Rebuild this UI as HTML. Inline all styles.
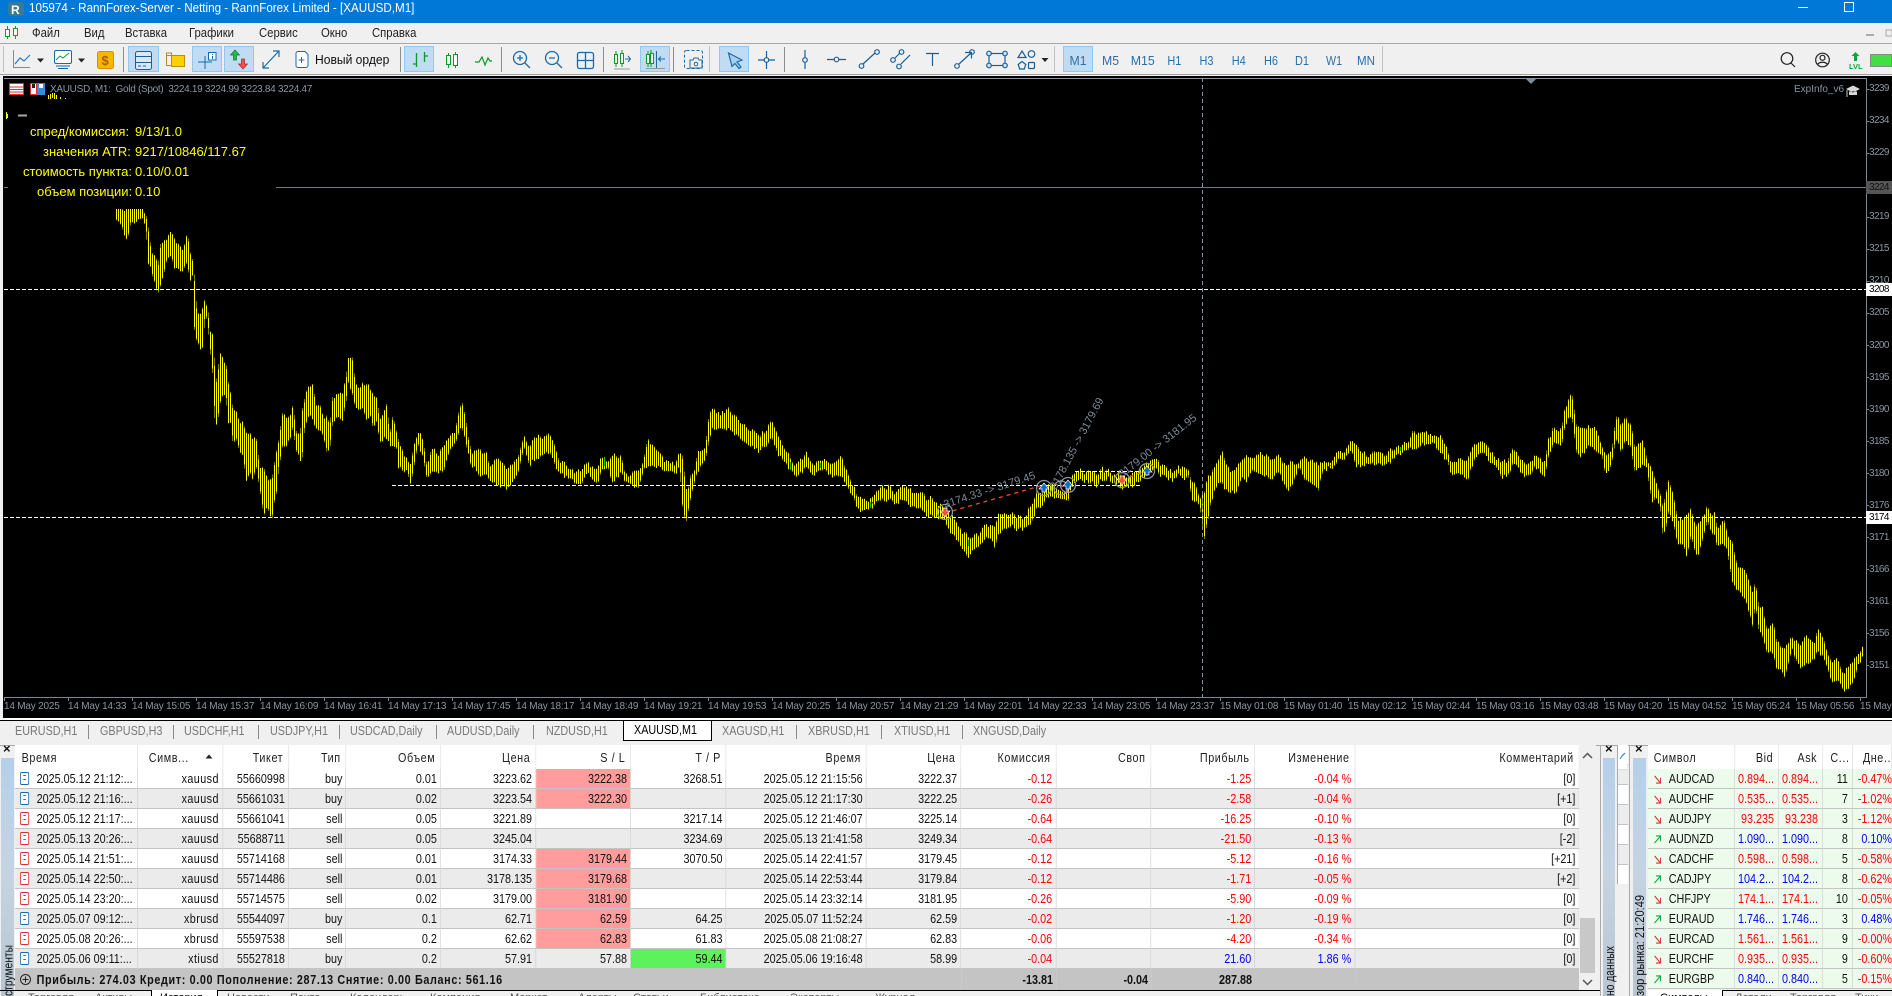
<!DOCTYPE html>
<html><head><meta charset="utf-8"><style>
html,body{margin:0;padding:0;width:1892px;height:996px;overflow:hidden;background:#f0f0f0;font-family:"Liberation Sans","Noto Sans CJK SC",sans-serif;}
#page{position:absolute;left:0;top:0;width:1892px;height:996px;overflow:hidden;background:#f0f0f0;}
.a{position:absolute;white-space:pre;transform-origin:0 50%;}
.bar{position:absolute;left:0;width:1892px;}
#chart{position:absolute;left:3px;top:76px;width:1889px;height:642px;background:#000;}
.tl,.pl{position:absolute;color:#8a96a3;font-size:10px;white-space:pre;}
.tl{top:701px;letter-spacing:-.2px;line-height:12px;}
.pl{left:1869px;letter-spacing:-.6px;line-height:12px;margin-top:1px;}
.pl.hl{left:1866px;width:23px;padding-left:3px;height:13px;line-height:13px;margin-top:0;}
.tab{position:absolute;top:723px;color:#787878;font-size:13px;line-height:15px;white-space:pre;transform:scaleX(.83);transform-origin:0 50%;}
.sp{position:absolute;top:725px;width:1px;height:14px;background:#8a8a8a;}
.wrap{position:absolute;transform:scaleX(.83);transform-origin:0 0;}
table{border-collapse:separate;border-spacing:0;table-layout:fixed;font-size:13px;color:#111;}
th{height:24px;box-sizing:border-box;font-weight:normal;text-align:right;padding:0 6px 0 0;background:#fff;border-right:1px solid #e4e4e4;letter-spacing:.7px;overflow:hidden;white-space:nowrap;color:#222;}
td{height:20px;box-sizing:border-box;padding:0 4px 0 0;text-align:right;border-right:1px solid #d4d4d4;border-bottom:1px solid #c4c4c4;overflow:hidden;white-space:nowrap;line-height:18px;}
tr:nth-child(even) td{background:#ebebeb;}
tr:nth-child(odd) td{background:#fff;}
td.l,th.l{text-align:left;}
td.s{background:#ff9c9c!important;}
td.g{background:#5cf25c!important;}
td.r,span.r{color:#f00;}
td.b,span.b{color:#00f;}
td.y{letter-spacing:.5px;}
.ic{display:inline-block;width:11px;height:13px;box-sizing:border-box;border:1.5px solid #1a6aa8;border-radius:2px;margin:0 9px 0 6px;vertical-align:-2px;position:relative;background:#fff;}
.ic:before{content:"";position:absolute;left:3px;top:2px;width:3px;height:1px;background:#1a6aa8;box-shadow:0 4px 0 #1a6aa8;}
.ic.e{border-color:#d83030;}
.ic.e:before{background:#d83030;box-shadow:0 4px 0 #d83030;}
#sum td{background:#c4c4c4!important;font-weight:bold;border:0;height:21px;}
#mw tr td{background:#edfbed!important;}
#mw td{padding-right:5px;}
#mw td:last-child{padding-right:0;border-right:0;}
.ar{display:inline-block;width:9px;height:9px;margin:0 9px 0 7px;vertical-align:-1px;}
.strip{position:absolute;top:758px;height:238px;background:linear-gradient(#b5d0ea,#c6d4e2 50%,#b8c4d0);}
.x{position:absolute;top:742px;font-size:13px;font-weight:bold;color:#111;line-height:14px;}
.bt{position:absolute;top:992px;height:4px;overflow:hidden;font-size:11px;color:#555;white-space:pre;line-height:12px;}
</style></head><body><div id="page">

<div class="bar" style="top:0;height:23px;background:#0078d7"></div>
<div class="a" style="left:29px;top:0;line-height:16px;font-size:13px;color:#fff;transform:scaleX(.895)">105974 - RannForex-Server - Netting - RannForex Limited - [XAUUSD,M1]</div>
<div class="bar" style="top:23px;height:20px;background:#f0f0f0"></div>
<div class="bar" style="top:43px;height:1px;background:#a8a8a8"></div>
<div class="bar" style="top:74px;height:1px;background:#a0a0a0"></div>
<div class="a" style="left:32px;top:25px;line-height:16px;font-size:13px;color:#222;transform:scaleX(.87)">Файл</div>
<div class="a" style="left:84px;top:25px;line-height:16px;font-size:13px;color:#222;transform:scaleX(.87)">Вид</div>
<div class="a" style="left:125px;top:25px;line-height:16px;font-size:13px;color:#222;transform:scaleX(.87)">Вставка</div>
<div class="a" style="left:189px;top:25px;line-height:16px;font-size:13px;color:#222;transform:scaleX(.87)">Графики</div>
<div class="a" style="left:259px;top:25px;line-height:16px;font-size:13px;color:#222;transform:scaleX(.87)">Сервис</div>
<div class="a" style="left:321px;top:25px;line-height:16px;font-size:13px;color:#222;transform:scaleX(.87)">Окно</div>
<div class="a" style="left:372px;top:25px;line-height:16px;font-size:13px;color:#222;transform:scaleX(.87)">Справка</div>
<div class="a" style="left:315px;top:52px;line-height:16px;font-size:13px;color:#111;transform:scaleX(.93)">Новый ордер</div>

<div id="chart"></div>
<svg id="cs" width="1892" height="996" style="position:absolute;left:0;top:0">
<defs>
<pattern id="st" patternUnits="userSpaceOnUse" x="0" y="0" width="2" height="2"><rect x="0" y="0" width="1" height="2" fill="#ffff00"/></pattern>
<filter id="jit" filterUnits="userSpaceOnUse" x="0" y="0" width="1892" height="996" color-interpolation-filters="sRGB">
<feTurbulence type="fractalNoise" baseFrequency="0.31 0.0013" numOctaves="1" seed="3" result="n1"/>
<feColorMatrix in="n1" type="matrix" values="0 0 0 0 .5 0 1 0 0 0 0 0 0 0 0 0 0 0 0 1" result="m1"/>
<feDisplacementMap in="SourceGraphic" in2="m1" scale="16" xChannelSelector="A" yChannelSelector="G" result="a"/>
<feTurbulence type="fractalNoise" baseFrequency="0.31 0.0013" numOctaves="1" seed="11" result="n2"/>
<feColorMatrix in="n2" type="matrix" values="0 0 0 0 .5 0 1 0 0 0 0 0 0 0 0 0 0 0 0 1" result="m2"/>
<feDisplacementMap in="SourceGraphic" in2="m2" scale="16" xChannelSelector="A" yChannelSelector="G" result="b"/>
<feMerge><feMergeNode in="a"/><feMergeNode in="b"/></feMerge>
</filter>
<clipPath id="cl"><rect x="100" y="209" width="1766" height="488"/></clipPath>
</defs>
<rect x="4" y="78" width="1862" height="1" fill="#8595a5"/>
<rect x="1866" y="78" width="1" height="620" fill="#7a8794"/>
<rect x="4" y="697" width="1863" height="1" fill="#7a8794"/>
<path d="M1526 79h10l-5 5z" fill="#7f8d9a"/>
<path stroke="#7a8794" fill="none" shape-rendering="crispEdges" d="M4.5 697V701M68.5 697V701M132.5 697V701M196.5 697V701M260.5 697V701M324.5 697V701M388.5 697V701M452.5 697V701M516.5 697V701M580.5 697V701M644.5 697V701M708.5 697V701M772.5 697V701M836.5 697V701M900.5 697V701M964.5 697V701M1028.5 697V701M1092.5 697V701M1156.5 697V701M1220.5 697V701M1284.5 697V701M1348.5 697V701M1412.5 697V701M1476.5 697V701M1540.5 697V701M1604.5 697V701M1668.5 697V701M1732.5 697V701M1796.5 697V701M1860.5 697V701M1866 89.5h3M1866 121.5h3M1866 153.5h3M1866 185.5h3M1866 217.5h3M1866 249.5h3M1866 281.5h3M1866 313.5h3M1866 345.5h3M1866 377.5h3M1866 409.5h3M1866 441.5h3M1866 473.5h3M1866 505.5h3M1866 537.5h3M1866 569.5h3M1866 601.5h3M1866 633.5h3M1866 665.5h3"/>
<path d="M4 187.5h4M276 187.5H1866" stroke="#6f7882" fill="none" shape-rendering="crispEdges"/>
<g clip-path="url(#cl)"><g filter="url(#jit)"><g transform="translate(8 0)">
<path fill="url(#st)" shape-rendering="crispEdges" d="M116 209L121 209 124 209 127 209 131 209 137 209 143 209 146 215 148 225 151 248 155 255 158 270 161 245 164 243 167 242 170 234 174 240 178 245 183 250 187 237 190 250 193 265 194 272 197 314 200 313 203 310 205 300 208 312 210 332 213 336 215 367 217 380 220 353 223 361 226 366 228 384 231 395 233 410 236 411 240 424 243 422 246 432 250 432 253 441 257 441 260 468 264 470 268 482 272 478 277 453 279 437 283 416 288 418 293 409 297 432 300 437 302 411 305 400 308 391 313 387 316 407 320 408 325 420 327 414 330 428 333 397 338 397 343 392 346 380 348 358 352 358 356 383 360 388 367 386 370 392 373 392 377 400 380 423 383 417 387 405 390 435 393 418 397 437 398 441 403 453 408 462 411 466 414 446 418 434 423 442 427 465 432 448 438 457 443 449 452 433 455 433 457 419 462 401 467 430 472 455 480 452 487 455 490 470 497 455 507 471 513 468 520 450 524 437 530 450 534 437 543 437 550 435 555 447 560 462 573 472 580 472 588 465 597 470 602 457 608 462 613 455 620 458 628 477 638 470 643 465 648 442 653 445 660 453 667 463 675 465 680 453 682 453 686 492 688 493 691 477 695 470 698 455 705 448 708 426 712 408 720 415 728 410 737 418 743 427 750 430 760 438 772 424 778 435 783 445 788 456 793 467 800 460 807 454 813 465 823 460 830 465 842 459 848 476 854 487 857 497 862 500 872 502 877 492 883 487 890 487 895 497 903 487 917 495 930 498 944 510 952 517 963 535 967 537 973 537 987 527 995 530 998 518 1007 513 1017 517 1023 520 1032 505 1037 493 1047 487 1055 487 1063 493 1068 492 1073 472 1087 472 1097 475 1102 470 1113 475 1120 475 1130 478 1140 472 1153 458 1162 467 1173 472 1180 467 1184 465 1188 473 1192 483 1197 490 1200 498 1204 495 1208 478 1211 477 1214 467 1218 463 1222 454 1227 467 1232 473 1237 468 1242 460 1247 460 1253 457 1258 454 1267 458 1273 462 1278 454 1287 466 1292 463 1298 465 1305 460 1313 462 1318 466 1323 459 1330 465 1337 456 1343 452 1352 441 1357 448 1367 456 1377 452 1387 455 1397 448 1410 442 1413 434 1423 433 1433 435 1443 439 1448 455 1453 463 1460 460 1468 460 1475 445 1482 440 1490 449 1495 460 1503 462 1508 462 1513 452 1518 456 1525 467 1532 460 1538 457 1545 463 1548 442 1553 430 1562 430 1564 412 1568 403 1572 396 1574 407 1577 429 1580 430 1587 430 1592 427 1597 435 1602 447 1606 455 1612 450 1615 430 1617 418 1621 426 1625 418 1630 423 1635 447 1642 440 1647 459 1652 472 1655 480 1660 493 1663 508 1666 497 1669 480 1674 500 1678 520 1683 520 1687 517 1691 510 1697 530 1702 520 1707 509 1715 515 1717 530 1724 523 1728 538 1732 542 1737 567 1740 568 1745 572 1750 587 1753 590 1755 583 1759 607 1763 608 1767 632 1771 626 1773 622 1777 642 1782 649 1785 650 1788 642 1793 640 1797 640 1801 648 1805 633 1810 643 1815 643 1818 631 1822 637 1827 653 1831 662 1837 658 1841 670 1845 675 1848 667 1854 660 1858 655 1862 650 1864 648 1864 655 1862 660 1858 663 1854 679 1848 688 1845 692 1841 683 1837 680 1831 680 1827 667 1822 655 1818 653 1815 657 1810 662 1805 662 1801 668 1797 660 1793 649 1788 662 1785 677 1782 670 1777 669 1773 652 1771 652 1767 652 1763 637 1759 628 1755 605 1753 623 1750 615 1745 600 1740 592 1737 587 1732 580 1728 553 1724 543 1717 547 1715 535 1707 522 1702 541 1697 557 1691 535 1687 556 1683 543 1678 543 1674 522 1669 510 1666 528 1663 535 1660 502 1655 495 1652 503 1647 467 1642 465 1635 470 1630 443 1625 440 1621 449 1617 441 1615 442 1612 462 1606 473 1602 455 1597 455 1592 445 1587 447 1580 455 1577 451 1574 430 1572 417 1568 420 1564 430 1562 442 1553 443 1548 457 1545 476 1538 467 1532 470 1525 477 1518 467 1513 463 1508 475 1503 477 1495 465 1490 460 1482 448 1475 455 1468 480 1460 471 1453 475 1448 463 1443 453 1433 440 1423 442 1413 451 1410 448 1397 455 1387 463 1377 462 1367 462 1357 465 1352 451 1343 457 1337 464 1330 467 1323 467 1318 492 1313 483 1305 478 1298 468 1292 483 1287 488 1278 468 1273 480 1267 478 1258 472 1253 468 1247 482 1242 477 1237 492 1232 492 1227 490 1222 482 1218 482 1214 490 1211 502 1208 520 1204 540 1200 503 1197 500 1192 498 1188 476 1184 477 1180 472 1173 480 1162 475 1153 467 1140 482 1130 485 1120 487 1113 480 1102 478 1097 485 1087 480 1073 480 1068 500 1063 498 1055 497 1047 497 1037 508 1032 520 1023 528 1017 528 1007 525 998 537 995 548 987 536 973 548 967 558 963 547 952 533 944 519 930 515 917 508 903 498 895 505 890 498 883 500 877 500 872 507 862 511 857 507 854 497 848 484 842 477 830 473 823 468 813 475 807 465 800 473 793 473 788 467 783 457 778 453 772 440 760 450 750 443 743 443 737 433 728 428 720 427 712 427 708 448 705 457 698 472 695 478 691 498 688 512 686 522 682 503 680 467 675 472 667 470 660 465 653 463 648 463 643 473 638 487 628 482 620 472 613 480 608 466 602 466 597 483 588 473 580 485 573 480 560 472 555 463 550 450 543 453 534 458 530 463 524 448 520 463 513 485 507 487 497 482 490 483 487 473 480 475 472 467 467 445 462 423 457 435 455 443 452 443 443 473 438 473 432 470 427 477 423 458 418 443 414 467 411 485 408 472 403 470 398 464 397 448 393 445 390 443 387 435 383 440 380 443 377 422 373 424 370 412 367 418 360 407 356 405 352 392 348 380 346 402 343 418 338 418 333 418 330 450 327 450 325 440 320 428 316 430 313 420 308 413 305 425 302 458 300 460 297 450 293 430 288 440 283 447 279 462 277 487 272 517 268 508 264 513 260 490 257 465 253 480 250 470 246 478 243 453 240 452 236 437 233 443 231 422 228 422 226 396 223 395 220 404 217 421 215 420 213 375 210 347 208 322 205 312 203 345 200 347 197 338 194 327 193 275 190 278 187 264 183 268 178 268 174 268 170 255 167 262 164 275 161 283 158 292 155 280 151 265 148 260 146 225 143 218 137 220 131 222 127 242 124 230 121 222 116 220Z"/>
</g></g></g>
<path d="M604.5 457V466M790.5 462V470M820.5 463V468M870.5 502V507M968.5 540V546M1400.5 447V451M1202.5 500V504" stroke="#00d000" fill="none" shape-rendering="crispEdges"/>
<path d="M6.5 112V119M7.5 114V118M48.5 95V99M50.5 94V99M52.5 93V98M54.5 93V99M56.5 95V99M60.5 97V99M65.5 98V99" stroke="#ffff00" fill="none" shape-rendering="crispEdges"/>
<path d="M18 115.5h9" stroke="#aaa" stroke-width="2"/>
<g stroke="#fff" fill="none" stroke-dasharray="4 2" shape-rendering="crispEdges">
<path d="M4 289.5H1866M4 517.5H1866M392 485.5H1140M1075 471.5H1140"/>
</g>
<path d="M1202.5 78V697" stroke="#8a97a3" fill="none" stroke-dasharray="4 3" shape-rendering="crispEdges"/>
<g stroke="#f04a2a" fill="none" stroke-dasharray="4 4" stroke-width="1.3">
<path d="M945 513L1040 486M1060 484L1068 492M1122 480L1147 470"/>
</g>
<g fill="#7d8a97" font-size="11" font-family="Liberation Sans,sans-serif">
<text transform="translate(945 508) rotate(-18)">3174.33 -&gt; 3179.45</text>
<text transform="translate(1056 490) rotate(-62)">3178.135 -&gt; 3179.69</text>
<text transform="translate(1122 478) rotate(-38)">3179.00 -&gt; 3181.95</text>
</g>
<g fill="none" stroke="#8a98a6" stroke-width="1.3">
<circle cx="945" cy="512" r="7.5"/><circle cx="1044" cy="488" r="7.5"/><circle cx="1061" cy="488" r="7"/><circle cx="1068" cy="485" r="7.5"/><circle cx="1122" cy="480" r="7.5"/><circle cx="1147" cy="471" r="7.5"/>
</g>
<g stroke="#fff" stroke-width=".7">
<path d="M1039 489l5-6 5 6h-3v3h-4v-3z" fill="#0c6cc4"/>
<path d="M1063 486l5-6 5 6h-3v3h-4v-3z" fill="#0c6cc4"/>
<path d="M1142 472l5-6 5 6h-3v3h-4v-3z" fill="#0c6cc4"/>
<path d="M940 511l5 6 5-6h-3v-3h-4v3z" fill="#f05030"/>
<path d="M1117 479l5 6 5-6h-3v-3h-4v3z" fill="#f05030"/>
</g>
<!-- chart header icons -->
<rect x="9.5" y="83.5" width="14" height="11" fill="#fff" stroke="#e03030"/>
<path d="M10 87h13M10 89.500h13M10 92h13" stroke="#e03030"/>
<rect x="30.500" y="83.500" width="6" height="11" fill="#fff" stroke="#e03030"/>
<rect x="37.500" y="83.500" width="7" height="11" fill="#3a88d8" stroke="#3a88d8"/>
<rect x="32" y="84" width="3" height="4" fill="#222"/><rect x="39" y="84" width="4" height="4" fill="#fff"/>
<path d="M1846 89l7-3.500 7 3.500-7 3.500zM1849 91.500v3.500h8v-3.500" fill="#d8d8d8"/><path d="M1847 90v7" stroke="#ccc"/>
<!-- logos -->
<rect x="8" y="2" width="16" height="14" rx="3" fill="#3a7a94"/>
<path d="M7.500 26v13M15.500 26v13" stroke="#0a0" />
<rect x="5.500" y="29.500" width="4" height="7" fill="#fff" stroke="#0a0"/><rect x="13.500" y="28.500" width="4" height="7" fill="#fff" stroke="#0a0"/>
<text x="11" y="14" font-size="12" font-weight="bold" fill="#fff" font-family="Liberation Sans,sans-serif">R</text>
<path d="M1798 7.500h10" stroke="#fff"/><rect x="1844.500" y="2.500" width="9" height="9" fill="none" stroke="#fff"/>
<path d="M1866 35h8" stroke="#aaa" stroke-width="2"/><rect x="1886" y="30" width="6" height="6" fill="none" stroke="#aaa"/>
<!-- toolbar -->
<g fill="#c0dcf3" stroke="#90c8f0" shape-rendering="crispEdges">
<rect x="128.500" y="46.500" width="30" height="25"/><rect x="192.500" y="46.500" width="29" height="25"/><rect x="224.500" y="46.500" width="29" height="25"/><rect x="404.500" y="46.500" width="29" height="25"/><rect x="640.500" y="46.500" width="29" height="25"/><rect x="719.500" y="46.500" width="29" height="25"/><rect x="1063.500" y="46.500" width="29" height="25"/>
</g>
<path d="M123.500 47v25M400.500 47v25M501.500 47v25M603.500 47v25M673.500 47v25M784.500 47v25" stroke="#8c8c8c"/>
<path d="M709.500 46v26M1054.500 46v26M3.500 46v26M1382.500 46v26" stroke="#c0c0c0" />
<path d="M13.500 50V67.500H30" stroke="#888" fill="none"/><path d="M15 64l5-6 4 3 6-6" stroke="#2a7ac0" fill="none" stroke-width="1.200"/>
<path d="M37 58.500h7l-3.500 4zM78 58.500h7l-3.500 4zM1041.500 58h7l-3.500 4z" fill="#222"/>
<rect x="54.500" y="50.500" width="17" height="13" rx="1.500" fill="#fff" stroke="#1a6aa8"/><path d="M56 60l4-4 3 2 6-5" stroke="#0a9a3a" fill="none"/><path d="M56 66h14M58 68.500h10" stroke="#1a6aa8"/>
<rect x="97.500" y="51.500" width="16" height="17" rx="2" fill="#f8b800" stroke="#d89000"/><text x="101.500" y="65" font-size="13" font-weight="bold" fill="#a86000" font-family="Liberation Sans,sans-serif">$</text>
<rect x="135.500" y="51.500" width="16" height="18" rx="2" fill="#d8e8f6" stroke="#245c8c"/><path d="M136 56.500h15M136 62.500h15M138 66h3M143 66h3" stroke="#245c8c"/>
<path d="M166.500 55.500h5v10h-5z" fill="none" stroke="#b08a30"/><rect x="171.500" y="55.500" width="13" height="11" fill="#ffd000" stroke="#b89000"/><path d="M166.500 55.500V53h5v2.500" fill="none" stroke="#b08a30"/>
<path d="M198 62h14M205 56v13" stroke="#1a6aa8" fill="none"/><rect x="208.500" y="52.500" width="7.500" height="7.500" fill="#fff" stroke="#1a6aa8"/><path d="M212.500 54v1M212.500 56v3" stroke="#1a6aa8"/>
<path d="M235 50l-4.500 5h3v5h3v-5h3z" fill="#2ab84a" stroke="#0a7a2a" stroke-width=".7"/><path d="M243 69l4.500-5h-3v-5h-3v5h-3z" fill="#f05050" stroke="#c02020" stroke-width=".7"/>
<path d="M263 68L279 51M273 51h6v6M263 62v6h6" fill="none" stroke="#1a6aa8" stroke-width="1.200"/>
<path d="M298 51.500h7l3 3v11a2 2 0 0 1-2 2h-8a2 2 0 0 1-2-2v-12a2 2 0 0 1 2-2z" fill="#fff" stroke="#1a6aa8"/><path d="M298.500 60h6M301.500 57v6" stroke="#1a6aa8"/>
<path d="M416.500 53v14M413 64h3.500M424.500 52v10M424.500 56h3.500" fill="none" stroke="#0a9a2a" stroke-width="1.300"/>
<path d="M448.500 53v15M455.500 52v16" stroke="#0a9a2a"/><rect x="446.500" y="55.500" width="4" height="9" fill="#fff" stroke="#0a9a2a"/><rect x="453.500" y="54.500" width="4" height="11" fill="#fff" stroke="#0a9a2a"/>
<path d="M475 62h4l3-5 3 8 3-7 2 3h2" fill="none" stroke="#0a9a2a" stroke-width="1.200"/>
<g fill="none" stroke="#1a6aa8" stroke-width="1.300"><circle cx="520" cy="58" r="6.500"/><path d="M525 63l5 5M517 58h6M520 55v6"/><circle cx="552" cy="58" r="6.500"/><path d="M557 63l5 5M549 58h6"/><rect x="577.500" y="52.500" width="16" height="16" rx="2"/><path d="M585.500 53v15M578 60.500h15"/></g>
<path d="M616 51v16M622 50v17" stroke="#0a9a2a"/><rect x="614.500" y="54.500" width="3" height="9" fill="#fff" stroke="#0a9a2a"/><rect x="620.500" y="53.500" width="3" height="10" fill="#fff" stroke="#0a9a2a"/><path d="M625 59h5M628 56l2.500 3-2.500 3" fill="none" stroke="#1a6aa8"/><path d="M614 69h16" stroke="#999"/>
<path d="M648 51v16M651 50v17" stroke="#0a9a2a"/><rect x="646.500" y="54.500" width="3" height="9" fill="#fff" stroke="#0a9a2a"/><rect x="650.500" y="53.500" width="3" height="10" fill="#fff" stroke="#0a9a2a"/><path d="M656.500 51v17" stroke="#1a6aa8"/><path d="M665 59h-6M661 56.500l-2.500 2.500 2.500 2.500" fill="none" stroke="#1a6aa8"/><path d="M646 68.500h19" stroke="#999"/>
<rect x="684.500" y="50.500" width="18" height="18" rx="2" fill="none" stroke="#1a6aa8" stroke-dasharray="3 2"/><path d="M690 60h3l1-2h4l1 2h3v8h-12z" fill="#f0f0f0" stroke="#1a6aa8"/><circle cx="696" cy="64" r="1.800" fill="none" stroke="#1a6aa8"/>
<path d="M728.500 53L742 60l-5 2 4 5-2 1.500-4-5-3 3z" fill="#a6cdf0" stroke="#1a6aa8" stroke-width="1.200"/>
<g fill="none" stroke="#145f9c" stroke-width="1.200">
<path d="M758 60h6M769 60h6M766.500 51v7M766.500 62v7"/><circle cx="766.500" cy="60" r="2.300"/>
<path d="M805 50v8M805 62v7"/><circle cx="805" cy="60" r="2.300"/>
<path d="M827 59.500h7M839 59.500h7"/><circle cx="836.500" cy="59.500" r="2.300"/>
<path d="M863 64l12-11"/><circle cx="861.500" cy="66" r="2.300"/><circle cx="877" cy="52" r="2.300"/>
<path d="M895 58l5-5M901 64l9-9"/><circle cx="893" cy="60" r="2.300"/><circle cx="901.500" cy="52" r="2.300"/><circle cx="899" cy="66.500" r="2.300"/>
<path d="M926 53.500h13M932.500 54v12"/>
<path d="M959 64l12-11M965 52.500h6.500v6"/><circle cx="957" cy="66" r="2.300"/><circle cx="972" cy="52" r="2.300"/>
<rect x="989" y="53.500" width="16" height="12"/><circle cx="989" cy="53.500" r="2.300" fill="#cfe2f3"/><circle cx="1005" cy="53.500" r="2.300" fill="#cfe2f3"/><circle cx="989" cy="65.500" r="2.300" fill="#cfe2f3"/><circle cx="1005" cy="65.500" r="2.300" fill="#cfe2f3"/>
<path d="M1022 51l4 6.500h-8z"/><circle cx="1031.500" cy="54" r="3.300"/><path d="M1022 61.500l3.800 3-1.500 4.500h-4.600l-1.500-4.500z"/><rect x="1028.500" y="62.500" width="6" height="6" rx="1"/>
</g>
<g font-family="Liberation Sans,sans-serif" font-size="13" fill="#2a6fa8" text-anchor="middle">
<text x="1078" y="65" textLength="17" lengthAdjust="spacingAndGlyphs">M1</text><text x="1110.500" y="65" textLength="17" lengthAdjust="spacingAndGlyphs">M5</text><text x="1142.700" y="65" textLength="24" lengthAdjust="spacingAndGlyphs">M15</text><text x="1174.400" y="65" textLength="14" lengthAdjust="spacingAndGlyphs">H1</text><text x="1206.500" y="65" textLength="14" lengthAdjust="spacingAndGlyphs">H3</text><text x="1238.700" y="65" textLength="14" lengthAdjust="spacingAndGlyphs">H4</text><text x="1271" y="65" textLength="14" lengthAdjust="spacingAndGlyphs">H6</text><text x="1302" y="65" textLength="14" lengthAdjust="spacingAndGlyphs">D1</text><text x="1334" y="65" textLength="16" lengthAdjust="spacingAndGlyphs">W1</text><text x="1366" y="65" textLength="18" lengthAdjust="spacingAndGlyphs">MN</text>
</g>
<g fill="none" stroke="#222" stroke-width="1.200"><circle cx="1787" cy="58.500" r="5.800"/><path d="M1791 63l4 4"/><circle cx="1822.500" cy="60" r="6.800"/><circle cx="1822.500" cy="57.800" r="2.500"/><path d="M1817.500 64.500c2-3 8-3 10 0"/></g>
<path d="M1855.500 52l-4 4h2.500v5h3v-5h2.500z" fill="#0aa83a"/><text x="1849" y="69" font-size="7.500" font-weight="bold" fill="#0aa83a" font-family="Liberation Sans,sans-serif">LVL</text>
<rect x="1870.500" y="54.500" width="21" height="12" fill="#40e040" stroke="#888"/>
</svg>

<div class="a" style="left:50px;top:84px;font-size:10px;line-height:12px;color:#8a96a3;letter-spacing:-.3px">XAUUSD, M1:  Gold (Spot)  3224.19 3224.99 3223.84 3224.47</div>
<div class="a" style="left:1794px;top:84px;font-size:10px;line-height:12px;color:#8a96a3">ExpInfo_v6</div>
<div class="a" style="left:30px;top:124px;font-size:13px;line-height:16px;color:#ff0">спред/комиссия:</div>
<div class="a" style="left:43px;top:144px;font-size:13px;line-height:16px;color:#ff0">значения ATR:</div>
<div class="a" style="left:23px;top:164px;font-size:13px;line-height:16px;color:#ff0">стоимость пункта:</div>
<div class="a" style="left:37px;top:184px;font-size:13px;line-height:16px;color:#ff0">объем позиции:</div>
<div class="a" style="left:135px;top:124px;font-size:13px;line-height:16px;color:#ff0">9/13/1.0</div>
<div class="a" style="left:135px;top:144px;font-size:13px;line-height:16px;color:#ff0">9217/10846/117.67</div>
<div class="a" style="left:135px;top:164px;font-size:13px;line-height:16px;color:#ff0">0.10/0.01</div>
<div class="a" style="left:135px;top:184px;font-size:13px;line-height:16px;color:#ff0">0.10</div>

<div class="pl" style="top:82px">3239</div><div class="pl" style="top:114px">3234</div><div class="pl" style="top:146px">3229</div>
<div class="pl hl" style="top:181px;background:#555;color:#111">3224</div>
<div class="pl" style="top:210px">3219</div><div class="pl" style="top:242px">3215</div><div class="pl" style="top:274px">3210</div>
<div class="pl hl" style="top:283px;background:#fff;color:#000">3208</div>
<div class="pl" style="top:306px">3205</div><div class="pl" style="top:339px">3200</div><div class="pl" style="top:371px">3195</div><div class="pl" style="top:403px">3190</div><div class="pl" style="top:435px">3185</div><div class="pl" style="top:467px">3180</div><div class="pl" style="top:499px">3176</div>
<div class="pl hl" style="top:511px;background:#fff;color:#000">3174</div>
<div class="pl" style="top:531px">3171</div><div class="pl" style="top:563px">3166</div><div class="pl" style="top:595px">3161</div><div class="pl" style="top:627px">3156</div><div class="pl" style="top:659px">3151</div>

<div class="tl" style="left:4px">14 May 2025</div><div class="tl" style="left:68px">14 May 14:33</div><div class="tl" style="left:132px">14 May 15:05</div><div class="tl" style="left:196px">14 May 15:37</div><div class="tl" style="left:260px">14 May 16:09</div><div class="tl" style="left:324px">14 May 16:41</div><div class="tl" style="left:388px">14 May 17:13</div><div class="tl" style="left:452px">14 May 17:45</div><div class="tl" style="left:516px">14 May 18:17</div><div class="tl" style="left:580px">14 May 18:49</div><div class="tl" style="left:644px">14 May 19:21</div><div class="tl" style="left:708px">14 May 19:53</div><div class="tl" style="left:772px">14 May 20:25</div><div class="tl" style="left:836px">14 May 20:57</div><div class="tl" style="left:900px">14 May 21:29</div><div class="tl" style="left:964px">14 May 22:01</div><div class="tl" style="left:1028px">14 May 22:33</div><div class="tl" style="left:1092px">14 May 23:05</div><div class="tl" style="left:1156px">14 May 23:37</div><div class="tl" style="left:1220px">15 May 01:08</div><div class="tl" style="left:1284px">15 May 01:40</div><div class="tl" style="left:1348px">15 May 02:12</div><div class="tl" style="left:1412px">15 May 02:44</div><div class="tl" style="left:1476px">15 May 03:16</div><div class="tl" style="left:1540px">15 May 03:48</div><div class="tl" style="left:1604px">15 May 04:20</div><div class="tl" style="left:1668px">15 May 04:52</div><div class="tl" style="left:1732px">15 May 05:24</div><div class="tl" style="left:1796px">15 May 05:56</div><div class="tl" style="left:1860px">15 May</div>

<div class="bar" style="top:718px;height:2px;background:#fff"></div>
<div class="bar" style="top:720px;height:1px;background:#000"></div>
<div class="bar" style="top:745px;height:1px;background:#a8a8a8"></div>
<div class="tab" style="left:15px">EURUSD,H1</div><div class="sp" style="left:88px"></div>
<div class="tab" style="left:100px">GBPUSD,H3</div><div class="sp" style="left:173px"></div>
<div class="tab" style="left:184px">USDCHF,H1</div><div class="sp" style="left:258px"></div>
<div class="tab" style="left:270px">USDJPY,H1</div><div class="sp" style="left:339px"></div>
<div class="tab" style="left:350px">USDCAD,Daily</div><div class="sp" style="left:436px"></div>
<div class="tab" style="left:447px">AUDUSD,Daily</div><div class="sp" style="left:533px"></div>
<div class="tab" style="left:546px">NZDUSD,H1</div>
<div style="position:absolute;left:623px;top:720px;width:87px;height:19px;border:1px solid #000;background:#fff;border-right:1.500px solid #000"></div>
<div class="tab" style="left:634px;top:722px;color:#000">XAUUSD,M1</div>
<div class="tab" style="left:722px">XAGUSD,H1</div><div class="sp" style="left:796px"></div>
<div class="tab" style="left:808px">XBRUSD,H1</div><div class="sp" style="left:881px"></div>
<div class="tab" style="left:894px">XTIUSD,H1</div><div class="sp" style="left:962px"></div>
<div class="tab" style="left:973px">XNGUSD,Daily</div>

<div class="x" style="left:3px">×</div>
<div class="strip" style="left:1px;width:13px"></div>

<div class="wrap" style="left:15px;top:745px;width:1885px;">
<table style="width:1885px">
<colgroup><col style="width:148.200px"><col style="width:102.400px"><col style="width:79.500px"><col style="width:69.300px"><col style="width:113.900px"><col style="width:114.500px"><col style="width:114.500px"><col style="width:115.100px"><col style="width:168.700px"><col style="width:113.900px"><col style="width:114.500px"><col style="width:114.500px"><col style="width:125.300px"><col style="width:120.500px"><col style="width:269.900px"></colgroup>
<thead><tr><th class="l" style="padding-left:8px">Время</th><th class="l" style="padding-left:13px">Симв...</th><th>Тикет</th><th>Тип</th><th>Объем</th><th>Цена</th><th>S / L</th><th>T / P</th><th>Время</th><th>Цена</th><th>Комиссия</th><th>Своп</th><th>Прибыль</th><th>Изменение</th><th>Комментарий</th></tr></thead>
<tbody>
<tr><td class="l"><span class="ic"></span>2025.05.12 21:12:...</td><td class="y">xauusd</td><td>55660998</td><td>buy</td><td>0.01</td><td>3223.62</td><td class="s">3222.38</td><td>3268.51</td><td>2025.05.12 21:15:56</td><td>3222.37</td><td class="r">-0.12</td><td></td><td class="r">-1.25</td><td class="r">-0.04 %</td><td>[0]</td></tr>
<tr><td class="l"><span class="ic"></span>2025.05.12 21:16:...</td><td class="y">xauusd</td><td>55661031</td><td>buy</td><td>0.02</td><td>3223.54</td><td class="s">3222.30</td><td></td><td>2025.05.12 21:17:30</td><td>3222.25</td><td class="r">-0.26</td><td></td><td class="r">-2.58</td><td class="r">-0.04 %</td><td>[+1]</td></tr>
<tr><td class="l"><span class="ic e"></span>2025.05.12 21:17:...</td><td class="y">xauusd</td><td>55661041</td><td>sell</td><td>0.05</td><td>3221.89</td><td></td><td>3217.14</td><td>2025.05.12 21:46:07</td><td>3225.14</td><td class="r">-0.64</td><td></td><td class="r">-16.25</td><td class="r">-0.10 %</td><td>[0]</td></tr>
<tr><td class="l"><span class="ic e"></span>2025.05.13 20:26:...</td><td class="y">xauusd</td><td>55688711</td><td>sell</td><td>0.05</td><td>3245.04</td><td></td><td>3234.69</td><td>2025.05.13 21:41:58</td><td>3249.34</td><td class="r">-0.64</td><td></td><td class="r">-21.50</td><td class="r">-0.13 %</td><td>[-2]</td></tr>
<tr><td class="l"><span class="ic e"></span>2025.05.14 21:51:...</td><td class="y">xauusd</td><td>55714168</td><td>sell</td><td>0.01</td><td>3174.33</td><td class="s">3179.44</td><td>3070.50</td><td>2025.05.14 22:41:57</td><td>3179.45</td><td class="r">-0.12</td><td></td><td class="r">-5.12</td><td class="r">-0.16 %</td><td>[+21]</td></tr>
<tr><td class="l"><span class="ic e"></span>2025.05.14 22:50:...</td><td class="y">xauusd</td><td>55714486</td><td>sell</td><td>0.01</td><td>3178.135</td><td class="s">3179.68</td><td></td><td>2025.05.14 22:53:44</td><td>3179.84</td><td class="r">-0.12</td><td></td><td class="r">-1.71</td><td class="r">-0.05 %</td><td>[+2]</td></tr>
<tr><td class="l"><span class="ic e"></span>2025.05.14 23:20:...</td><td class="y">xauusd</td><td>55714575</td><td>sell</td><td>0.02</td><td>3179.00</td><td class="s">3181.90</td><td></td><td>2025.05.14 23:32:14</td><td>3181.95</td><td class="r">-0.26</td><td></td><td class="r">-5.90</td><td class="r">-0.09 %</td><td>[0]</td></tr>
<tr><td class="l"><span class="ic"></span>2025.05.07 09:12:...</td><td class="y">xbrusd</td><td>55544097</td><td>buy</td><td>0.1</td><td>62.71</td><td class="s">62.59</td><td>64.25</td><td>2025.05.07 11:52:24</td><td>62.59</td><td class="r">-0.02</td><td></td><td class="r">-1.20</td><td class="r">-0.19 %</td><td>[0]</td></tr>
<tr><td class="l"><span class="ic e"></span>2025.05.08 20:26:...</td><td class="y">xbrusd</td><td>55597538</td><td>sell</td><td>0.2</td><td>62.62</td><td class="s">62.83</td><td>61.83</td><td>2025.05.08 21:08:27</td><td>62.83</td><td class="r">-0.06</td><td></td><td class="r">-4.20</td><td class="r">-0.34 %</td><td>[0]</td></tr>
<tr><td class="l"><span class="ic"></span>2025.05.06 09:11:...</td><td class="y">xtiusd</td><td>55527818</td><td>buy</td><td>0.2</td><td>57.91</td><td>57.88</td><td class="g">59.44</td><td>2025.05.06 19:16:48</td><td>58.99</td><td class="r">-0.04</td><td></td><td class="b">21.60</td><td class="b">1.86 %</td><td>[0]</td></tr>
<tr id="sum"><td colspan="10" class="l" style="padding-left:26px;letter-spacing:.78px">Прибыль: 274.03  Кредит: 0.00  Пополнение: 287.13  Снятие: 0.00  Баланс: 561.16</td><td>-13.81</td><td style="padding-right:4px">-0.04</td><td>287.88</td><td></td><td></td></tr>
</tbody></table></div>
<svg width="14" height="14" style="position:absolute;left:19px;top:972px"><circle cx="6.500" cy="7.500" r="5" fill="none" stroke="#222"/><path d="M3.500 7.500h6M6.500 4.500v6" stroke="#222"/></svg>
<svg width="12" height="8" style="position:absolute;left:205px;top:753px"><path d="M0.500 5.500h7L4 1.500z" fill="#222"/></svg>

<div style="position:absolute;left:1579px;top:745px;width:17px;height:245px;background:#f0f0f0"></div>
<div style="position:absolute;left:1580px;top:918px;width:15px;height:55px;background:#c8c8c8"></div>
<svg width="17" height="12" style="position:absolute;left:1579px;top:750px"><path d="M4 8l4.500-4.500L13 8" fill="none" stroke="#555" stroke-width="1.500"/></svg>
<svg width="17" height="12" style="position:absolute;left:1579px;top:976px"><path d="M4 4l4.500 4.500L13 4" fill="none" stroke="#555" stroke-width="1.500"/></svg>

<div style="position:absolute;left:0;top:990px;width:1600px;height:1px;background:#000"></div>
<div style="position:absolute;left:151px;top:990px;width:65px;height:6px;background:#fff;border-left:1px solid #000;border-right:1px solid #000"></div>
<div class="bt" style="left:28px">Торговля</div><div class="bt" style="left:95px">Активы</div><div class="bt" style="left:160px;color:#000">История</div><div class="bt" style="left:227px">Новости</div><div class="bt" style="left:290px">Почта</div><div class="bt" style="left:350px">Календарь</div><div class="bt" style="left:430px">Компания</div><div class="bt" style="left:510px">Маркет</div><div class="bt" style="left:578px">Алерты</div><div class="bt" style="left:633px">Статьи</div><div class="bt" style="left:700px">Библиотека</div><div class="bt" style="left:790px">Эксперты</div><div class="bt" style="left:875px">Журнал</div>

<!-- panel 2 -->
<div style="position:absolute;left:1600px;top:745px;width:1px;height:251px;background:#aaa"></div>
<div style="position:absolute;left:1629px;top:745px;width:1px;height:251px;background:#aaa"></div>
<div class="x" style="left:1605px">×</div>
<div class="strip" style="left:1603px;width:12px"></div>
<div style="position:absolute;left:1617px;top:745px;width:10px;height:139px;background:repeating-linear-gradient(#fff 0,#fff 19px,#c4c4c4 19px,#c4c4c4 20px,#ededed 20px,#ededed 39px,#c4c4c4 39px,#c4c4c4 40px);border-left:1px solid #aaa;"></div>
<div style="position:absolute;left:1618px;top:745px;width:9px;height:24px;background:#fff;border-bottom:1px solid #ddd"></div>
<svg width="8" height="10" style="position:absolute;left:1619px;top:752px"><path d="M1 7l2-3 3-3" fill="none" stroke="#2a7ac0"/></svg>

<!-- market watch -->
<div class="x" style="left:1635px">×</div>
<div class="strip" style="left:1633px;width:13px"></div>
<svg width="1892" height="996" style="position:absolute;left:0;top:0;pointer-events:none">
<g font-family="Liberation Sans,sans-serif" font-size="13" fill="#111">
<text transform="translate(12.500 996) rotate(-90)" textLength="51" lengthAdjust="spacingAndGlyphs">струменты</text>
<text transform="translate(1614 996) rotate(-90)" textLength="50" lengthAdjust="spacingAndGlyphs">но данных</text>
<text transform="translate(1644 996) rotate(-90)" textLength="101" lengthAdjust="spacingAndGlyphs">зор рынка: 21:20:49</text>
</g>
</svg>
<div class="wrap" style="left:1648px;top:745px;width:294px">
<table id="mw" style="width:294px">
<colgroup><col style="width:104.800px"><col style="width:53px"><col style="width:53px"><col style="width:36.100px"><col style="width:47.100px"></colgroup>
<thead><tr><th class="l" style="padding-left:7px">Символ</th><th>Bid</th><th>Ask</th><th class="l" style="padding-left:9px">С...</th><th class="l" style="padding-left:12px">Дне...</th></tr></thead>
<tbody>
<tr><td class="l"><svg class="ar" viewBox="0 0 10 10"><path d="M1 1l8 8M3 9h6V3" fill="none" stroke="#d83030" stroke-width="1.300"/></svg>AUDCAD</td><td class="r">0.894...</td><td class="r">0.894...</td><td>11</td><td class="r">-0.47%</td></tr>
<tr><td class="l"><svg class="ar" viewBox="0 0 10 10"><path d="M1 1l8 8M3 9h6V3" fill="none" stroke="#d83030" stroke-width="1.300"/></svg>AUDCHF</td><td class="r">0.535...</td><td class="r">0.535...</td><td>7</td><td class="r">-1.02%</td></tr>
<tr><td class="l"><svg class="ar" viewBox="0 0 10 10"><path d="M1 1l8 8M3 9h6V3" fill="none" stroke="#d83030" stroke-width="1.300"/></svg>AUDJPY</td><td class="r">93.235</td><td class="r">93.238</td><td>3</td><td class="r">-1.12%</td></tr>
<tr><td class="l"><svg class="ar" viewBox="0 0 10 10"><path d="M1 9l8-8M3 1h6v6" fill="none" stroke="#0aa83a" stroke-width="1.300"/></svg>AUDNZD</td><td class="b">1.090...</td><td class="b">1.090...</td><td>8</td><td class="b">0.10%</td></tr>
<tr><td class="l"><svg class="ar" viewBox="0 0 10 10"><path d="M1 1l8 8M3 9h6V3" fill="none" stroke="#d83030" stroke-width="1.300"/></svg>CADCHF</td><td class="r">0.598...</td><td class="r">0.598...</td><td>5</td><td class="r">-0.58%</td></tr>
<tr><td class="l"><svg class="ar" viewBox="0 0 10 10"><path d="M1 9l8-8M3 1h6v6" fill="none" stroke="#0aa83a" stroke-width="1.300"/></svg>CADJPY</td><td class="b">104.2...</td><td class="b">104.2...</td><td>8</td><td class="r">-0.62%</td></tr>
<tr><td class="l"><svg class="ar" viewBox="0 0 10 10"><path d="M1 1l8 8M3 9h6V3" fill="none" stroke="#d83030" stroke-width="1.300"/></svg>CHFJPY</td><td class="r">174.1...</td><td class="r">174.1...</td><td>10</td><td class="r">-0.05%</td></tr>
<tr><td class="l"><svg class="ar" viewBox="0 0 10 10"><path d="M1 9l8-8M3 1h6v6" fill="none" stroke="#0aa83a" stroke-width="1.300"/></svg>EURAUD</td><td class="b">1.746...</td><td class="b">1.746...</td><td>3</td><td class="b">0.48%</td></tr>
<tr><td class="l"><svg class="ar" viewBox="0 0 10 10"><path d="M1 1l8 8M3 9h6V3" fill="none" stroke="#d83030" stroke-width="1.300"/></svg>EURCAD</td><td class="r">1.561...</td><td class="r">1.561...</td><td>9</td><td class="r">-0.00%</td></tr>
<tr><td class="l"><svg class="ar" viewBox="0 0 10 10"><path d="M1 1l8 8M3 9h6V3" fill="none" stroke="#d83030" stroke-width="1.300"/></svg>EURCHF</td><td class="r">0.935...</td><td class="r">0.935...</td><td>9</td><td class="r">-0.60%</td></tr>
<tr><td class="l"><svg class="ar" viewBox="0 0 10 10"><path d="M1 9l8-8M3 1h6v6" fill="none" stroke="#0aa83a" stroke-width="1.300"/></svg>EURGBP</td><td class="b">0.840...</td><td class="b">0.840...</td><td>5</td><td class="r">-0.15%</td></tr>
</tbody></table></div>
<div style="position:absolute;left:1648px;top:990px;width:244px;height:1px;background:#000"></div>
<div style="position:absolute;left:1648px;top:990px;width:74px;height:6px;background:#fff;border-right:1px solid #000"></div>
<div class="bt" style="left:1660px;color:#000">Символы</div><div class="bt" style="left:1735px">Детали</div><div class="bt" style="left:1790px">Торговля</div><div class="bt" style="left:1855px">Тики</div>

</div></body></html>
